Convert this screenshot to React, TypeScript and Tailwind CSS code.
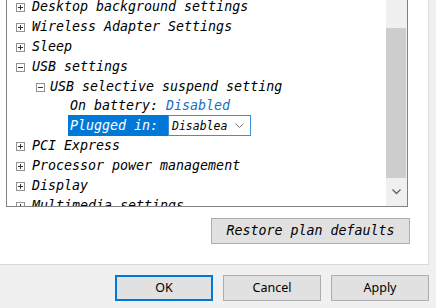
import React from "react";

const mono = "font-['DejaVu_Sans_Mono','Liberation_Mono',monospace] italic";

function Expander({ open }: { open?: boolean }) {
  return (
    <svg width="9" height="9" viewBox="0 0 9 9" className="shrink-0">
      <rect x="0.5" y="0.5" width="8" height="8" fill="#fff" stroke="#919191" />
      <path d="M2 4.5h5" stroke="#333" />
      {!open && <path d="M4.5 2v5" stroke="#333" />}
    </svg>
  );
}

function Row({
  label,
  level = 0,
  open,
}: {
  label: string;
  level?: number;
  open?: boolean;
}) {
  return (
    <div
      className={`flex items-center h-[20px] ${level === 0 ? "pl-[9px] gap-[7px]" : "pl-[29px] gap-[5px]"}`}
    >
      <Expander open={open} />
      <span className="whitespace-nowrap">{label}</span>
    </div>
  );
}

export default function App() {
  return (
    <div className="w-[436px] h-[308px] bg-[#f0f0f0] overflow-hidden flex flex-col text-black">
      {/* Settings panel */}
      <div className="w-[429px] h-[265px] bg-white border-r border-b border-[#dadada] flex flex-col">
        <div className={`ml-[6px] w-[402px] h-[207px] border-x border-b border-[#828282] flex overflow-hidden ${mono} text-[13.3px] leading-[20px]`}>
          <div className="flex-1 flex flex-col mt-[-3px]">
            <Row label="Desktop background settings" />
            <Row label="Wireless Adapter Settings" />
            <Row label="Sleep" />
            <Row label="USB settings" open />
            <Row label="USB selective suspend setting" level={1} open />
            <div className="h-[18px] flex items-center pl-[63px] whitespace-pre">
              <span>On battery: </span>
              <span className="text-[#1a6fc4]">Disabled</span>
            </div>
            <div className="h-[22px] flex items-start pl-[61px]">
              <span className="h-[21px] w-[100px] bg-[#0078d7] text-white pl-[2px] flex items-center">
                Plugged in:
              </span>
              <div className="h-[21px] w-[83px] border border-[#3c8fd9] bg-white flex items-center justify-between pl-[3px] pr-[6px]">
                <span className="text-[11.5px] text-black">Disablea</span>
                <svg width="9" height="6" viewBox="0 0 9 6">
                  <path d="M0.5 0.5l4 4 4-4" fill="none" stroke="#777" />
                </svg>
              </div>
            </div>
            <Row label="PCI Express" />
            <Row label="Processor power management" />
            <Row label="Display" />
            <Row label="Multimedia settings" />
          </div>
          {/* Scrollbar */}
          <div className="w-[21px] bg-[#f0f0f0] flex flex-col">
            <div className="h-[28px]" />
            <div className="w-[20px] h-[150px] bg-[#cdcdcd]" />
            <div className="flex-1 flex items-center justify-center pr-[1px]">
              <svg width="9" height="6" viewBox="0 0 9 6">
                <path d="M0.5 0.5l4 4 4-4" fill="none" stroke="#606060" strokeWidth="1.3" />
              </svg>
            </div>
          </div>
        </div>
        <div className="flex justify-end pr-[18px] mt-[11px]">
          <button className={`w-[199px] h-[26px] bg-[#e1e1e1] border border-[#adadad] ${mono} text-[13.3px]`}>
            Restore plan defaults
          </button>
        </div>
      </div>

      {/* Dialog buttons */}
      <div className="flex gap-[10px] pl-[115px] pt-[10px] font-['Noto_Sans',sans-serif] text-[12.5px]">
        <button className="w-[98px] h-[26px] bg-[#e1e1e1] border-2 border-[#0078d7]">OK</button>
        <button className="w-[98px] h-[26px] bg-[#e1e1e1] border border-[#adadad]">Cancel</button>
        <button className="w-[98px] h-[26px] bg-[#e1e1e1] border border-[#adadad]">Apply</button>
      </div>
    </div>
  );
}
